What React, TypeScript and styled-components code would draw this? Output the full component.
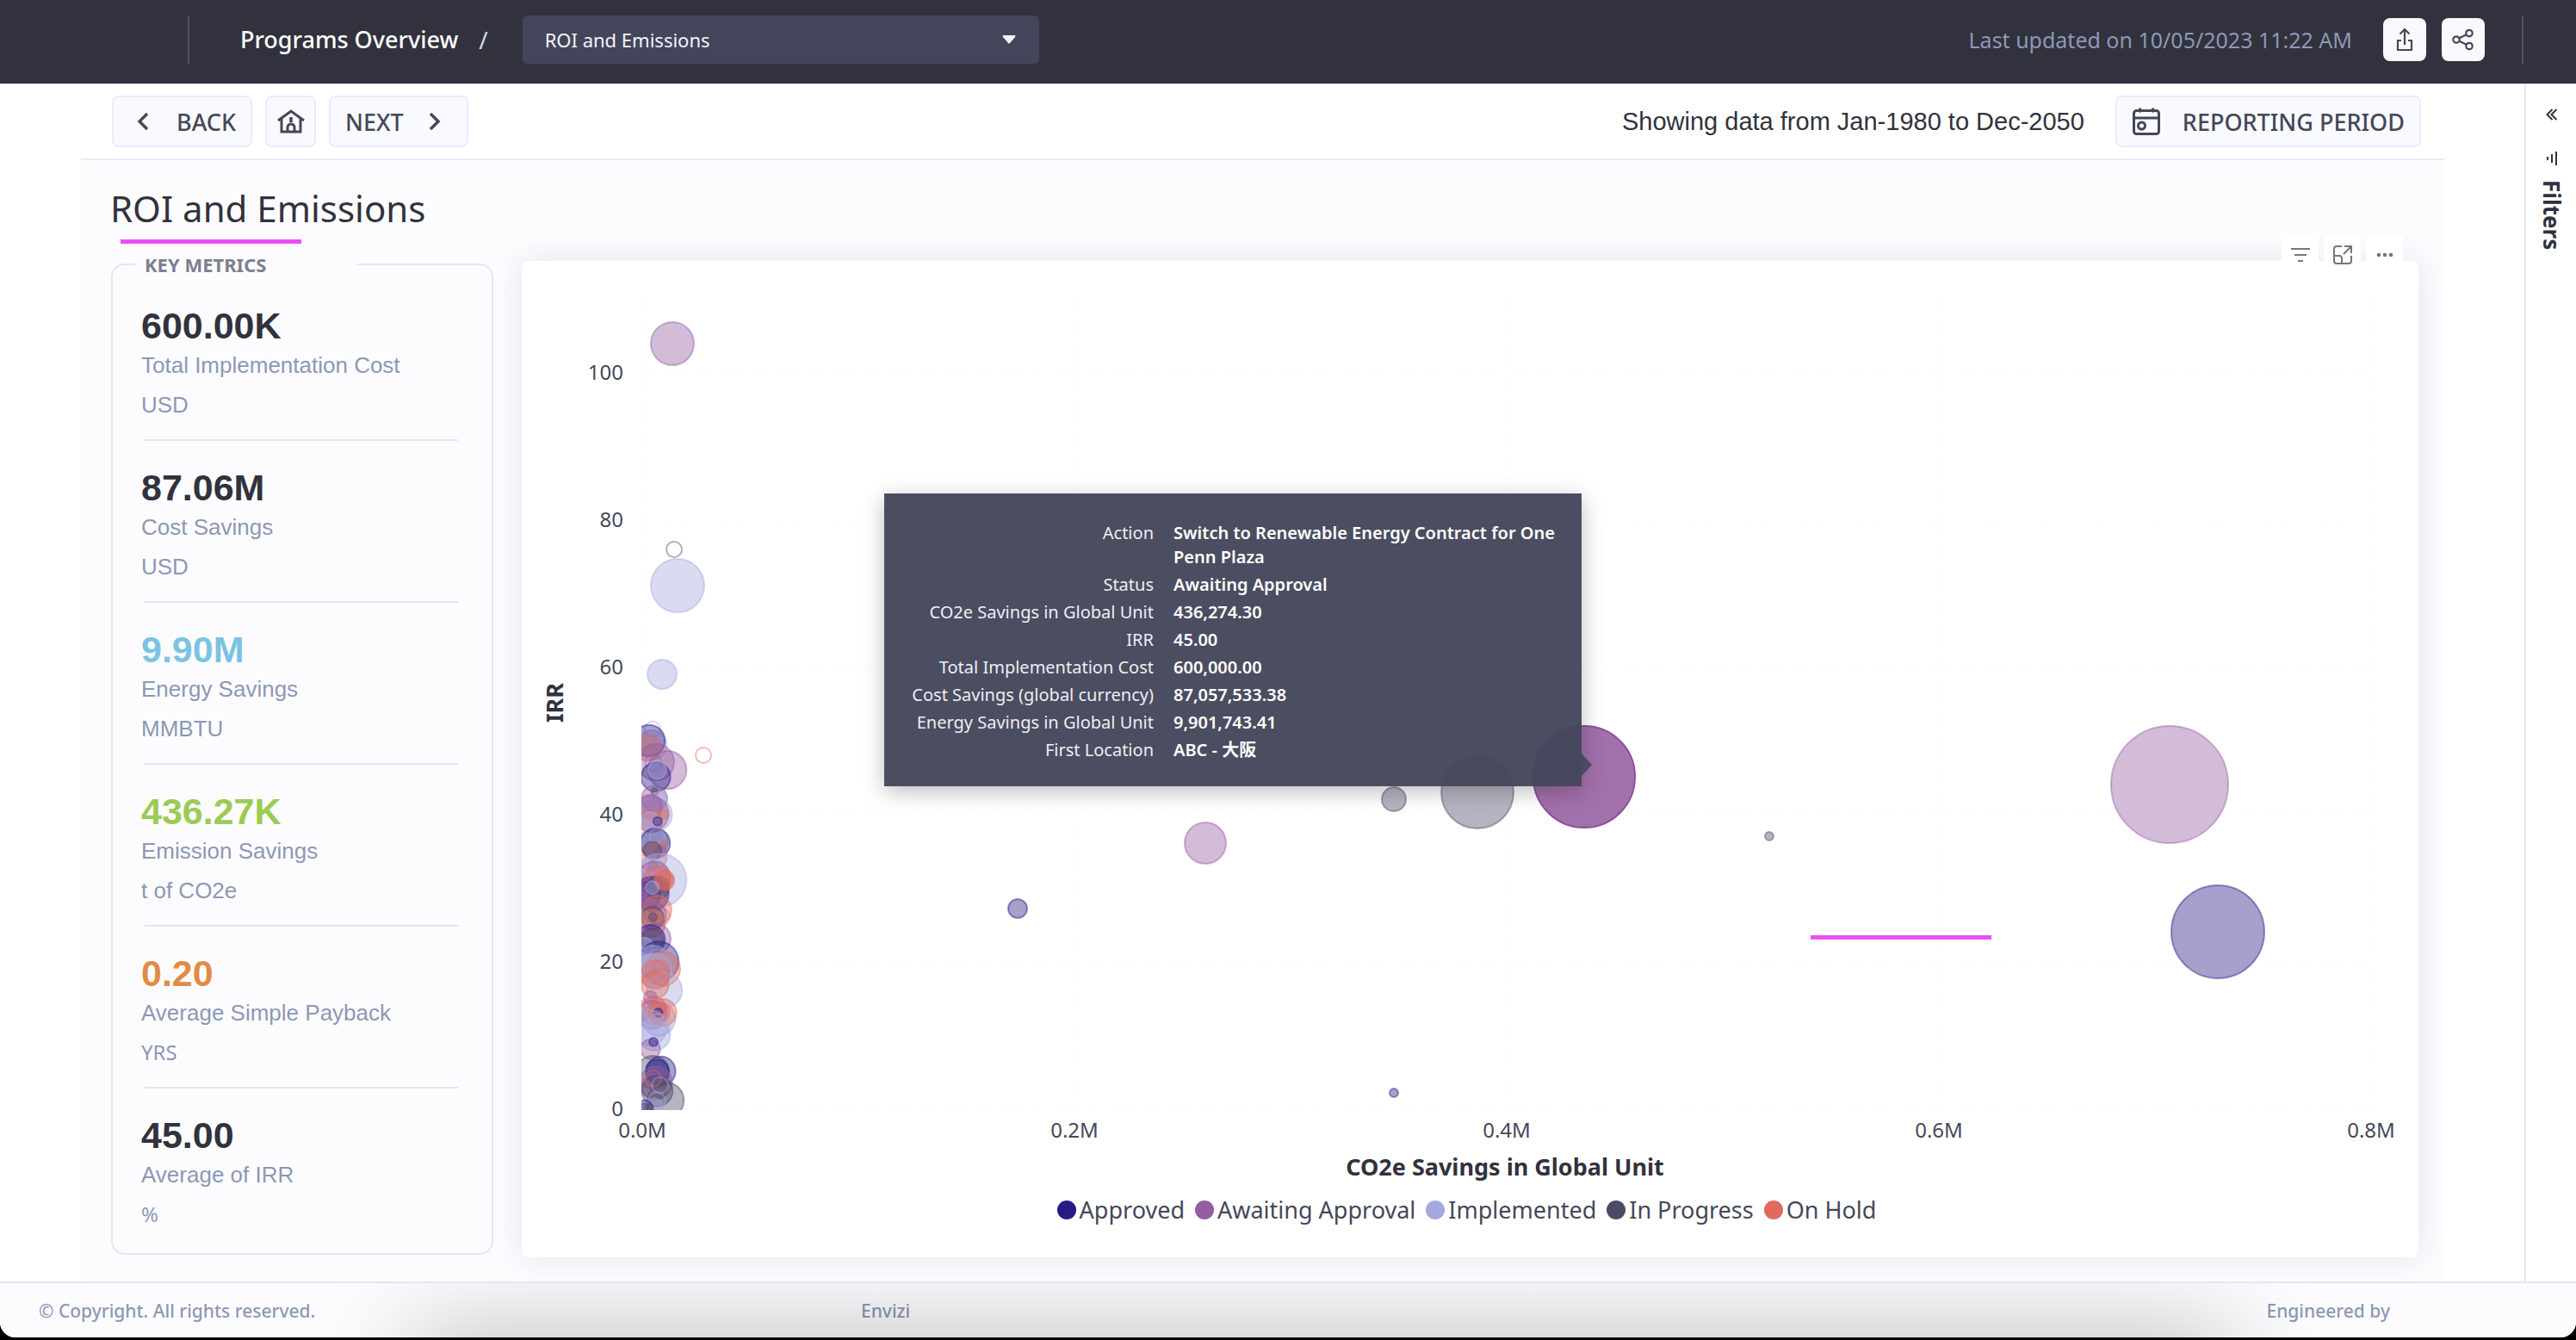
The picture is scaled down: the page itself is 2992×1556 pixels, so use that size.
import React from "react";
import styled, { createGlobalStyle } from "styled-components";

const sans = `"Noto Sans", "Open Sans", "Noto Sans CJK JP", sans-serif`;
const arial = `"Liberation Sans", Arial, sans-serif`;
const ink = "#31323d";
const slate = "#454759";
const muted = "#8d98b5";
const line = "#e3e7f1";

const Global = createGlobalStyle`
  *, *::before, *::after { box-sizing: border-box; }
  body { margin: 0; background: #000; font-family: ${sans}; color: ${ink}; }
  button, select { font: inherit; color: inherit; }
`;

const Shell = styled.div`
  display: flex;
  flex-direction: column;
  min-height: calc(100vh - 3px);
  background: #fff;
  border-radius: 0 0 18px 18px;
  overflow: hidden;
`;

/* ---------- top bar ---------- */
const TopBar = styled.header`
  display: flex;
  align-items: center;
  height: 98px;
  padding: 0 61px 6px 218px;
  background: ${ink};
  border-bottom: 1px solid #e1e2ea;
`;
const Rule = styled.span`
  width: 2px;
  height: 56px;
  background: #51525e;
`;
const Crumb = styled.span`
  margin-left: 59px;
  font-size: 27px;
  font-weight: 500;
  color: #fff;
`;
const Slash = styled.span`
  margin: 0 40px 0 24px;
  font-size: 28px;
  color: #d5d9e6;
`;
const PickerWrap = styled.label`
  display: grid;
  align-items: center;
  width: 600px;
  > * { grid-area: 1 / 1; }
  > svg { justify-self: end; margin-right: 27px; pointer-events: none; }
`;
const Picker = styled.select`
  appearance: none;
  width: 100%;
  height: 56px;
  padding: 0 26px;
  border: 0;
  border-radius: 6px;
  background: #43465a;
  color: #f3f4fa;
  font-size: 22px;
`;
const Updated = styled.span`
  margin-left: auto;
  font-size: 25px;
  color: ${muted};
`;
const TopActions = styled.div`
  display: flex;
  gap: 18px;
  margin: 0 43px 0 36px;
`;
const TopButton = styled.button`
  display: grid;
  place-items: center;
  width: 50px;
  height: 50px;
  padding: 0;
  border: 0;
  border-radius: 8px;
  background: #f8f9ff;
`;

/* ---------- body ---------- */
const Body = styled.div`
  display: flex;
  flex: 1;
`;
const Main = styled.main`
  display: flex;
  flex-direction: column;
  flex: 1;
  min-width: 0;
  margin: 0 93px 0 94px;
  background: #fcfcff;
`;
const Toolbar = styled.div`
  display: flex;
  align-items: center;
  height: 88px;
  padding: 0 27px 0 36px;
  background: #fff;
  border-bottom: 2px solid #e7eaf6;
`;
const NavButton = styled.button<{ $gap?: number; $align?: string }>`
  display: flex;
  align-items: center;
  justify-content: ${(p) => p.$align ?? "center"};
  gap: ${(p) => p.$gap ?? 0}px;
  height: 60px;
  padding: 0 17px;
  border: 2px solid #ebebfc;
  border-radius: 8px;
  background: #f9faff;
  color: ${slate};
  font-size: 27px;
  font-weight: 500;
`;
const NavGroup = styled.nav`
  display: grid;
  grid-template-columns: 163px 59px 162px;
  gap: 15px;
`;
const HomeButton = styled(NavButton)`
  padding: 0;
`;
const Range = styled.span`
  margin: 0 36px 0 auto;
  font-family: ${arial};
  font-size: 29px;
`;

const Heading = styled.h1`
  margin: 20px 34px 0;
  font-size: 42px;
  line-height: 72px;
  font-weight: 400;
`;
const Accent = styled.div`
  width: 210px;
  height: 5px;
  margin-left: 46px;
  background: #ea50f5;
`;
const Panels = styled.div`
  display: flex;
  flex: 1;
  gap: 33px;
  padding: 10px 30px 28px 35px;
`;

/* ---------- key metrics ---------- */
const Metrics = styled.fieldset`
  width: 444px;
  margin: 0 0 3px;
  padding: 3px 0 0;
  border: 2px solid ${line};
  border-radius: 16px;
`;
const MetricsTitle = styled.legend`
  width: 258px;
  margin-left: 26px;
  padding: 0 11px;
  font-size: 22px;
  line-height: 28px;
  font-weight: 700;
  color: #7d7f8e;
`;
const Metric = styled.div`
  padding: 29px 33px 20px;
`;
const Divider = styled.hr`
  height: 2px;
  margin: 0 39px 0 37px;
  border: 0;
  background: ${line};
`;
const Value = styled.div<{ $color: string }>`
  font-family: ${arial};
  font-size: 43px;
  line-height: 50px;
  font-weight: 700;
  color: ${(p) => p.$color};
`;
const Label = styled.div`
  margin: 1px 0 6px;
  font-family: ${arial};
  font-size: 26px;
  line-height: 40px;
  color: ${muted};
`;
const Unit = styled.div<{ $plain?: boolean }>`
  font-family: ${(p) => (p.$plain ? sans : arial)};
  font-size: ${(p) => (p.$plain ? 24 : 26)}px;
  line-height: 40px;
  color: ${muted};
`;

/* ---------- chart ---------- */
const Card = styled.section`
  position: relative;
  display: flex;
  flex-direction: column;
  flex: 1;
  min-width: 0;
  margin-top: 10px;
  border-radius: 8px;
  background: #fff;
  box-shadow: 0 0 34px rgba(40, 42, 60, 0.11);
`;
const Plot = styled.svg`
  display: block;
  width: 100%;
  height: auto;
  font-family: ${sans};
`;
const Legend = styled.ul`
  display: flex;
  justify-content: center;
  gap: 12px;
  margin: 0;
  padding: 0 8px 0 0;
  list-style: none;
  font-size: 27px;
  line-height: 44px;
  color: ${slate};
`;
const LegendItem = styled.li<{ $color: string }>`
  display: flex;
  align-items: center;
  gap: 4px;
  &::before {
    content: "";
    width: 22px;
    height: 22px;
    border-radius: 50%;
    background: ${(p) => p.$color};
  }
`;
const CardTools = styled.div`
  position: absolute;
  top: -29px;
  right: 18px;
  display: flex;
  gap: 6px;
`;
const ToolButton = styled.button`
  display: grid;
  place-items: center;
  width: 43px;
  height: 43px;
  padding: 0;
  border: 0;
  background: #fff;
`;
const Marker = styled.div`
  position: absolute;
  left: 1497px;
  top: 783px;
  width: 210px;
  height: 5px;
  background: #ea50f5;
`;
const Tooltip = styled.div`
  position: absolute;
  left: 421px;
  top: 270px;
  width: 810px;
  padding: 32px 20px 28px;
  background: rgba(68, 70, 90, 0.96);
  box-shadow: 0 6px 24px rgba(0, 0, 0, 0.26);
  color: #fff;
  &::after {
    content: "";
    position: absolute;
    left: 100%;
    top: 302px;
    border: solid transparent;
    border-width: 13px 0 13px 12px;
    border-left-color: #4b4a60;
  }
`;
const Facts = styled.dl`
  display: grid;
  grid-template-columns: 293px 1fr;
  gap: 4px 23px;
  margin: 0;
  font-size: 20px;
  line-height: 28px;
  dt { text-align: right; color: #eeeef3; }
  dd { margin: 0; font-weight: 600; }
`;

/* ---------- filters rail ---------- */
const Rail = styled.aside`
  display: flex;
  flex-direction: column;
  align-items: center;
  width: 60px;
  padding: 24px 2px 0 4px;
  border-left: 2px solid #e6e7ef;
  background: #fff;
`;
const RailButton = styled.button`
  display: grid;
  place-items: center;
  width: 40px;
  height: 22px;
  padding: 0;
  border: 0;
  background: none;
`;
const RailTitle = styled.div`
  display: flex;
  align-items: center;
  gap: 16px;
  margin-top: 31px;
  writing-mode: vertical-rl;
  font-size: 26px;
  line-height: 40px;
  font-weight: 700;
`;

/* ---------- footer ---------- */
const Footer = styled.footer`
  position: relative;
  display: grid;
  grid-template-columns: 955px 1fr auto;
  align-items: center;
  height: 65px;
  padding: 0 216px 0 45px;
  overflow: hidden;
  border-top: 2px solid ${line};
  background: #fcfcff;
  color: ${muted};
  font-size: 21px;
  font-weight: 500;
  &::after {
    content: "";
    position: absolute;
    left: 480px;
    right: 400px;
    top: 100%;
    height: 100px;
    box-shadow: 0 0 120px 0 rgba(0, 0, 0, 0.28);
  }
`;

const colors: Record<string, string> = {
  B: "#241b84",
  P: "#955c9f",
  L: "#a4a8dd",
  G: "#4c4a66",
  R: "#df6a5f",
};

type Bubble = [keyof typeof colors, number, number, number, number?];

// series, x, y, radius, 1 = outline only
const bubbles: Bubble[] = [
  ["P", 175, 96, 25],
  ["G", 177, 335, 9, 1],
  ["L", 181, 377, 31],
  ["L", 163, 480, 17],
  ["R", 211, 574, 9, 1],
  ["P", 794, 676, 24],
  ["G", 1013, 625, 14],
  ["G", 1110, 617, 42],
  ["G", 1449, 668, 5],
  ["P", 1914, 608, 68],
  ["B", 1970, 779, 54],
  ["B", 576, 752, 11],
  ["B", 1013, 966, 5],
];

// projects near the origin, at three times the plot's scale
const cluster: Bubble[] = [
  ["L", 474, 80, 27, 1], ["L", 472, 135, 51], ["B", 462, 120, 55], ["R", 457, 145, 46],
  ["P", 485, 195, 64], ["P", 525, 222, 67], ["P", 476, 196, 28, 1], ["B", 485, 247, 51],
  ["L", 490, 222, 32], ["P", 480, 322, 45], ["G", 481, 298, 12], ["L", 500, 322, 25],
  ["L", 485, 378, 57], ["P", 468, 375, 62], ["P", 465, 350, 42], ["R", 511, 376, 18],
  ["R", 467, 401, 40], ["L", 465, 400, 32], ["B", 491, 401, 15], ["L", 478, 470, 50],
  ["B", 483, 478, 52], ["L", 490, 452, 26, 1], ["R", 475, 526, 48], ["R", 513, 478, 11],
  ["P", 503, 506, 18], ["G", 473, 503, 31], ["P", 474, 555, 15], ["L", 500, 606, 92],
  ["L", 470, 590, 60], ["P", 480, 597, 56], ["R", 490, 605, 48], ["B", 470, 655, 60],
  ["B", 452, 660, 48], ["P", 430, 655, 25], ["P", 435, 690, 25], ["P", 470, 655, 58],
  ["G", 492, 632, 40], ["R", 515, 607, 35], ["R", 515, 605, 31], ["L", 473, 632, 23],
  ["R", 490, 710, 50], ["R", 503, 733, 30, 1], ["P", 472, 730, 50], ["G", 474, 737, 39],
  ["R", 470, 757, 48], ["G", 475, 735, 14], ["P", 485, 810, 52], ["B", 467, 812, 50],
  ["G", 474, 812, 37], ["L", 445, 836, 30], ["B", 495, 890, 70], ["L", 475, 900, 66],
  ["L", 490, 875, 28, 1], ["R", 510, 915, 60], ["L", 480, 920, 60], ["R", 482, 935, 50],
  ["L", 515, 990, 62], ["R", 482, 970, 48], ["R", 506, 912, 28, 1], ["R", 502, 943, 28, 1],
  ["P", 466, 1015, 23], ["L", 495, 1090, 58], ["R", 475, 1058, 48], ["P", 472, 1075, 50],
  ["R", 472, 1042, 28, 1], ["R", 510, 1067, 47], ["R", 497, 1067, 36], ["B", 494, 1067, 15],
  ["L", 462, 1120, 62], ["L", 480, 1145, 55], ["L", 495, 1110, 38, 1], ["P", 466, 1195, 34],
  ["B", 477, 1170, 15], ["G", 475, 1275, 57], ["B", 503, 1271, 51], ["B", 490, 1271, 40],
  ["P", 485, 1312, 57], ["P", 480, 1325, 45], ["G", 490, 1340, 54], ["G", 520, 1373, 63],
  ["R", 475, 1297, 28, 1], ["L", 500, 1320, 28, 1], ["L", 488, 1375, 30, 1], ["L", 478, 1398, 32],
  ["B", 447, 1398, 26], ["G", 445, 1398, 14], ["G", 465, 1398, 12],
];

const Dot = ({ b, w }: { b: Bubble; w: number }) => (
  <circle
    cx={b[1]}
    cy={b[2]}
    r={b[3]}
    fill={b[4] ? "none" : colors[b[0]]}
    fillOpacity={0.41}
    stroke={colors[b[0]]}
    strokeOpacity={0.45}
    strokeWidth={w}
  />
);

const yTicks = [0, 20, 40, 60, 80, 100];
const xTicks = ["0.0M", "0.2M", "0.4M", "0.6M", "0.8M"];

const Chart = () => (
  <Plot viewBox="0 0 2203 1080" role="img" aria-label="IRR by CO2e savings in global unit">
    <defs>
      <clipPath id="plot-area">
        <rect x="139" y="0" width="2064" height="986" />
      </clipPath>
    </defs>
    <g stroke="#f9f9fb" strokeWidth="2" strokeDasharray="2 11">
      {yTicks.map((t, i) => (
        <line key={t} x1="139" x2="2146" y1={985 - i * 171} y2={985 - i * 171} />
      ))}
      {xTicks.map((t, i) => (
        <line key={t} x1={140 + i * 502} x2={140 + i * 502} y1="44" y2="985" />
      ))}
    </g>
    <g fill={slate} fontSize="24">
      {yTicks.map((t, i) => (
        <text key={t} x="118" y={993 - i * 171} textAnchor="end">{t}</text>
      ))}
      {xTicks.map((t, i) => (
        <text key={t} x={140 + i * 502} y="1018" textAnchor="middle">{t}</text>
      ))}
    </g>
    <g fill={ink} fontSize="27" fontWeight="700" textAnchor="middle">
      <text transform="translate(48 513) rotate(-90)">IRR</text>
      <text x="1142" y="1062">CO2e Savings in Global Unit</text>
    </g>
    <g clipPath="url(#plot-area)">
      {bubbles.map((b, i) => <Dot key={i} b={b} w={2} />)}
      <circle cx="1234" cy="599" r="59" fill="#955c9f" fillOpacity="0.88" stroke="#8f4f9d" strokeWidth="2" />
      <g transform="translate(-6 517) scale(0.333333)">
        {cluster.map((b, i) => <Dot key={i} b={b} w={6} />)}
      </g>
    </g>
  </Plot>
);

const metrics = [
  { value: "600.00K", label: "Total Implementation Cost", unit: "USD", color: ink },
  { value: "87.06M", label: "Cost Savings", unit: "USD", color: ink },
  { value: "9.90M", label: "Energy Savings", unit: "MMBTU", color: "#7bc3e2" },
  { value: "436.27K", label: "Emission Savings", unit: "t of CO2e", color: "#9bcb55" },
  { value: "0.20", label: "Average Simple Payback", unit: "YRS", color: "#e18c46", plain: true },
  { value: "45.00", label: "Average of IRR", unit: "%", color: ink, plain: true },
];

const facts = [
  ["Action", "Switch to Renewable Energy Contract for One Penn Plaza"],
  ["Status", "Awaiting Approval"],
  ["CO2e Savings in Global Unit", "436,274.30"],
  ["IRR", "45.00"],
  ["Total Implementation Cost", "600,000.00"],
  ["Cost Savings (global currency)", "87,057,533.38"],
  ["Energy Savings in Global Unit", "9,901,743.41"],
  ["First Location", "ABC - 大阪"],
];

const legend = [
  ["Approved", colors.B],
  ["Awaiting Approval", colors.P],
  ["Implemented", colors.L],
  ["In Progress", colors.G],
  ["On Hold", colors.R],
];

const Chevron = ({ right }: { right?: boolean }) => (
  <svg width="14" height="22" viewBox="0 0 14 22" fill="none" stroke={slate} strokeWidth="3.4">
    <path d={right ? "M2 2l9 9-9 9" : "M12 2l-9 9 9 9"} />
  </svg>
);

const HomeIcon = () => (
  <svg width="32" height="30" viewBox="0 0 32 30" fill="none" stroke={slate} strokeWidth="3">
    <path d="M1 14L16 3l15 11" />
    <path d="M5 12v15h22V12" />
    <path d="M12 27v-5a4 4 0 018 0v5" />
    <path d="M16 10v6" strokeWidth="3.6" />
  </svg>
);

const CalendarIcon = () => (
  <svg width="34" height="34" viewBox="0 0 34 34" fill="none" stroke={slate} strokeWidth="3">
    <rect x="2.5" y="4.5" width="29" height="27" rx="3" />
    <path d="M2.5 13h29M9.5 1.5v5M24.5 1.5v5" />
    <circle cx="11.5" cy="22" r="4" />
  </svg>
);

export default function App() {
  return (
    <>
      <Global />
      <Shell>
        <TopBar>
          <Rule />
          <Crumb>Programs Overview</Crumb>
          <Slash>/</Slash>
          <PickerWrap>
            <Picker aria-label="Report" defaultValue="roi">
              <option value="roi">ROI and Emissions</option>
            </Picker>
            <svg width="16" height="10" viewBox="0 0 16 10">
              <path d="M1 0h14q1 1 0 2L9 9q-1 1-2 0L1 2q-1-1 0-2z" fill="#f3f4fa" />
            </svg>
          </PickerWrap>
          <Updated>Last updated on 10/05/2023 11:22 AM</Updated>
          <TopActions>
            <TopButton aria-label="Export">
              <svg width="20" height="28" viewBox="0 0 20 28" fill="none" stroke={slate} strokeWidth="2.2">
                <path d="M6 15H2v11h16V15h-4M10 20V2M4.5 7.5L10 2l5.5 5.5" />
              </svg>
            </TopButton>
            <TopButton aria-label="Share">
              <svg width="26" height="26" viewBox="0 0 26 26" fill="none" stroke={slate} strokeWidth="2.2">
                <circle cx="5" cy="13" r="3.7" />
                <circle cx="20" cy="5.5" r="3.7" />
                <circle cx="20" cy="20.5" r="3.7" />
                <path d="M8.4 11.3l8.2-4.1M8.4 14.7l8.2 4.1" />
              </svg>
            </TopButton>
          </TopActions>
          <Rule />
        </TopBar>

        <Body>
          <Main>
            <Toolbar>
              <NavGroup>
                <NavButton $gap={32} $align="flex-end"><Chevron />BACK</NavButton>
                <HomeButton aria-label="Home"><HomeIcon /></HomeButton>
                <NavButton $gap={29} $align="flex-start">NEXT<Chevron right /></NavButton>
              </NavGroup>
              <Range>Showing data from Jan-1980 to Dec-2050</Range>
              <NavButton $gap={25}><CalendarIcon />REPORTING PERIOD</NavButton>
            </Toolbar>

            <Heading>ROI and Emissions</Heading>
            <Accent />

            <Panels>
              <Metrics>
                <MetricsTitle>KEY METRICS</MetricsTitle>
                {metrics.map((m, i) => (
                  <React.Fragment key={m.label}>
                    {i > 0 && <Divider />}
                    <Metric>
                      <Value $color={m.color}>{m.value}</Value>
                      <Label>{m.label}</Label>
                      <Unit $plain={m.plain}>{m.unit}</Unit>
                    </Metric>
                  </React.Fragment>
                ))}
              </Metrics>

              <Card>
                <Chart />
                <Legend>
                  {legend.map(([name, color]) => (
                    <LegendItem key={name} $color={color}>{name}</LegendItem>
                  ))}
                </Legend>
                <CardTools>
                  <ToolButton aria-label="Filters on this visual">
                    <svg width="22" height="18" viewBox="0 0 22 18" stroke="#777" strokeWidth="2">
                      <path d="M0 2h22M4 9h14M8 16h6" />
                    </svg>
                  </ToolButton>
                  <ToolButton aria-label="Focus mode">
                    <svg width="24" height="24" viewBox="0 0 24 24" fill="none" stroke="#777" strokeWidth="2">
                      <path d="M11 2H5a3 3 0 00-3 3v14a3 3 0 003 3h14a3 3 0 003-3v-6M14 2h8v8M22 2l-9 9M2 13h6a3 3 0 013 3v6" />
                    </svg>
                  </ToolButton>
                  <ToolButton aria-label="More options">
                    <svg width="20" height="6" viewBox="0 0 20 6" fill="#777">
                      <circle cx="3" cy="3" r="2.3" />
                      <circle cx="10" cy="3" r="2.3" />
                      <circle cx="17" cy="3" r="2.3" />
                    </svg>
                  </ToolButton>
                </CardTools>
                <Marker />
                <Tooltip role="tooltip">
                  <Facts>
                    {facts.map(([k, v]) => (
                      <React.Fragment key={k}>
                        <dt>{k}</dt>
                        <dd>{v}</dd>
                      </React.Fragment>
                    ))}
                  </Facts>
                </Tooltip>
              </Card>
            </Panels>
          </Main>

          <Rail>
            <RailButton aria-label="Expand filters">
              <svg width="14" height="14" viewBox="0 0 14 14" fill="none" stroke={ink} strokeWidth="2">
                <path d="M7.5 1l-6 6 6 6M12.5 1l-6 6 6 6" />
              </svg>
            </RailButton>
            <RailTitle>
              <svg width="14" height="18" viewBox="0 0 14 18" stroke={ink} strokeWidth="2">
                <path d="M2 7v4M7 4v10M12 1v16" />
              </svg>
              Filters
            </RailTitle>
          </Rail>
        </Body>

        <Footer>
          <span>© Copyright. All rights reserved.</span>
          <span>Envizi</span>
          <span>Engineered by</span>
        </Footer>
      </Shell>
    </>
  );
}
